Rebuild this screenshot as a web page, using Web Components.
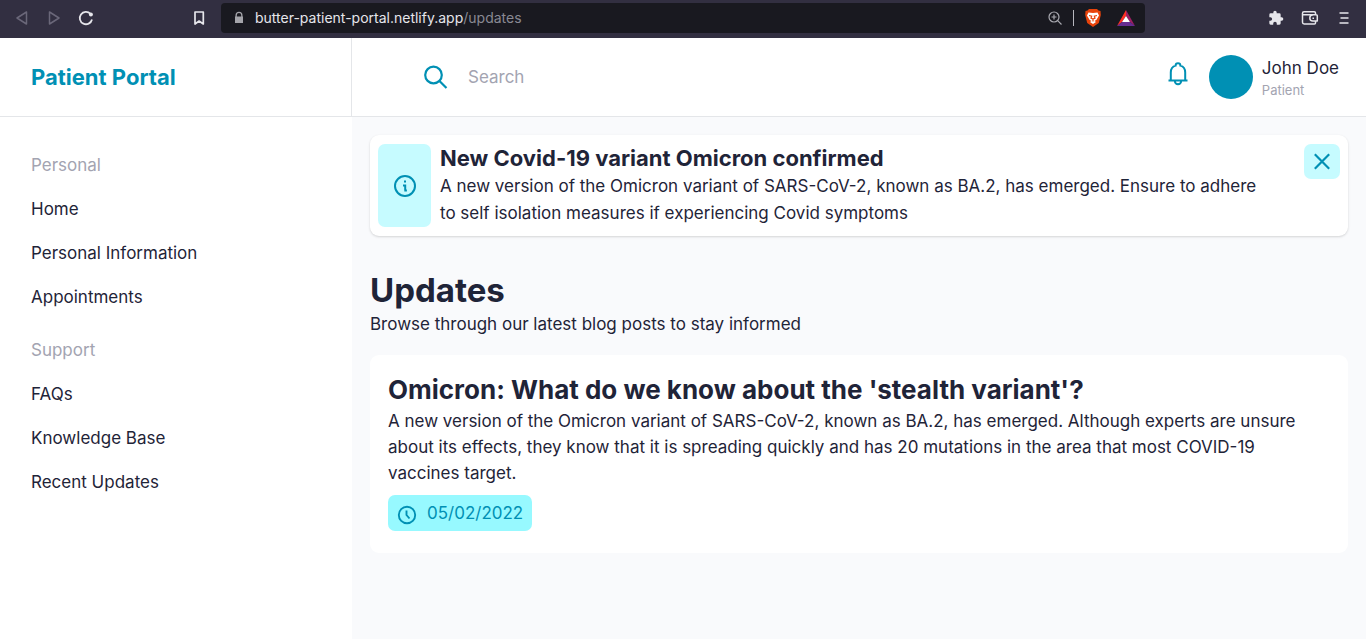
<!DOCTYPE html>
<html lang="en">
<head>
<meta charset="utf-8">
<meta name="viewport" content="width=device-width, initial-scale=1">
<title>Patient Portal</title>
<style>
  body {
    --teal: #0090b4;
    --ink: #1f2438;
    --muted: #a3a4b1;
    --line: #e4e6e9;
    --pale: #c6fbff;
    margin: 0;
    min-height: 100vh;
    display: flex;
    flex-direction: column;
    background: #f9fafc;
    color: var(--ink);
    font: 17px/26px Inter, "Liberation Sans", sans-serif;
  }
</style>
</head>
<body>
<browser-bar host="butter-patient-portal.netlify.app" path="/updates"></browser-bar>
<portal-shell>
  <portal-brand slot="brand">Patient Portal</portal-brand>
  <portal-search slot="top"></portal-search>
  <portal-user slot="top" name="John Doe" role-name="Patient"></portal-user>
  <nav-group slot="nav" heading="Personal" items="Home,Personal Information,Appointments"></nav-group>
  <nav-group slot="nav" heading="Support" items="FAQs,Knowledge Base,Recent Updates"></nav-group>
  <alert-banner heading="New Covid-19 variant Omicron confirmed">A new version of the Omicron variant of SARS-CoV-2, known as BA.2, has emerged. Ensure to adhere to self isolation measures if experiencing Covid symptoms</alert-banner>
  <page-heading heading="Updates">Browse through our latest blog posts to stay informed</page-heading>
  <update-card heading="Omicron: What do we know about the 'stealth variant'?" date="05/02/2022">A new version of the Omicron variant of SARS-CoV-2, known as BA.2, has emerged. Although experts are unsure about its effects, they know that it is spreading quickly and has 20 mutations in the area that most COVID-19 vaccines target.</update-card>
</portal-shell>

<script>
  const resetCss = `
    *, :host { box-sizing: border-box; }
    h1, h2, p, ul { margin: 0; padding: 0; }
    button { border: 0; padding: 0; background: none; color: inherit; font: inherit; display: grid; place-items: center; cursor: pointer; }
    svg { display: block; flex: none; }
  `;

  class BaseElement extends HTMLElement {
    constructor() {
      super();
      this.attachShadow({ mode: 'open' });
    }

    connectedCallback() {
      this.shadowRoot.innerHTML = `<style>${resetCss}${this.styles()}</style>${this.template()}`;
    }

    attr(name) {
      return this.getAttribute(name) || '';
    }
  }

  class BrowserBar extends BaseElement {
    styles() {
      return `
        :host {
          display: flex;
          align-items: center;
          height: 38px;
          padding: 0 12px 2px;
          background: #322f41;
          color: #e6e6eb;
          font-size: 14px;
          line-height: 20px;
        }
        .tools { display: flex; gap: 12px; }
        .tools button { width: 20px; height: 20px; }
        .dim { color: #6a6779; }
        .left { flex: none; width: 209px; padding-right: 12px; }
        .left .mark { margin-left: auto; }
        .address {
          flex: 0 1 924px;
          display: flex;
          align-items: center;
          height: 30px;
          padding: 0 9px 0 12px;
          border-radius: 4px;
          background: #191920;
        }
        .url { flex: 1; margin-left: 10px; }
        .path { color: #898993; }
        .rule { width: 1px; height: 16px; margin: 0 10px; background: #b7b7be; }
        .shields { display: flex; gap: 14px; }
        .right { margin-left: auto; gap: 14px; }
      `;
    }

    template() {
      return `
        <div class="tools left">
          <button class="dim" aria-label="Back"><svg width="14" height="16" viewBox="0 0 14 16" fill="none" stroke="currentColor" stroke-width="1.5" stroke-linejoin="round"><path d="M11.5 2v12L2 8z"/></svg></button>
          <button class="dim" aria-label="Forward"><svg width="14" height="16" viewBox="0 0 14 16" fill="none" stroke="currentColor" stroke-width="1.5" stroke-linejoin="round"><path d="M2.500 2v12L12 8z"/></svg></button>
          <button aria-label="Reload"><svg width="16" height="16" viewBox="0 0 16 16" fill="none" stroke="currentColor" stroke-width="1.800"><path d="M14 9.500A6.200 6.200 0 1 1 12.500 3.800"/><circle cx="12.900" cy="4.400" r="2" fill="currentColor" stroke="none"/></svg></button>
          <button class="mark" aria-label="Bookmark"><svg width="12" height="16" viewBox="0 0 12 16" fill="none" stroke="currentColor" stroke-width="1.700" stroke-linejoin="round"><path d="M2 2h8.300v12L6.100 11 2 14z"/></svg></button>
        </div>
        <div class="address">
          <svg width="12" height="14" viewBox="0 0 12 14" fill="#a4a4aa"><path d="M2.500 5.500V4.300a3.500 3.500 0 0 1 7 0v1.200h.500V12H2V5.500zm1.300 0h4.400V4.300a2.200 2.200 0 0 0-4.400 0z"/></svg>
          <div class="url">${this.attr('host')}<span class="path">${this.attr('path')}</span></div>
          <svg width="16" height="16" viewBox="0 0 16 16" fill="none" stroke="#a9a9b0" stroke-width="1.200"><circle cx="7" cy="7" r="5"/><path d="M10.700 10.700 14.500 14.500M7 4.500v5M4.500 7h5"/></svg>
          <div class="rule"></div>
          <div class="shields">
            <svg width="18" height="20" viewBox="0 0 18 20"><path fill="#e8430b" d="M5 1h8l1.500 1.500L16.500 3l.300 4-2 8L9 19l-5.800-4-2-8 .300-4 2-.500z"/><path fill="#fff" d="M4.500 4.500 9 5l4.500-.500 1.500 3-2.500 4.200-2 1.200L12 14l-3 2-3-2 1.500-1.100-2-1.200L3 7.500z"/><path d="m5 7.500 2.700.700-.700 1.900 2 1 2-1-.700-1.900 2.700-.700M9 11v2.500" fill="none" stroke="#e8430b" stroke-width="1.200"/></svg>
            <svg width="20" height="20" viewBox="0 0 20 20"><path fill="#ff2f24" d="M10 2v6L6 14l-5 4z"/><path fill="#9e1f63" d="m10 2 9 16-5-4-4-6z"/><path fill="#662d91" d="M1 18h18l-5-4H6z"/><path fill="#fff" d="m10 8 4 6H6z"/></svg>
          </div>
        </div>
        <div class="tools right">
          <button aria-label="Extensions"><svg width="16" height="16" viewBox="0 0 24 24" fill="currentColor"><path d="M20.500 11H19V7a2 2 0 0 0-2-2h-4V3.500a2.500 2.500 0 0 0-5 0V5H4a2 2 0 0 0-2 2v3.800h1.500a2.700 2.700 0 0 1 0 5.400H2V20a2 2 0 0 0 2 2h3.800v-1.500a2.700 2.700 0 0 1 5.400 0V22H17a2 2 0 0 0 2-2v-4h1.500a2.500 2.500 0 0 0 0-5z"/></svg></button>
          <button aria-label="Wallet"><svg width="18" height="16" viewBox="0 0 18 16" fill="none" stroke="currentColor" stroke-width="1.500" stroke-linejoin="round"><path d="M14.500 4.700V3a1.200 1.200 0 0 0-1.200-1.200H3A1.500 1.500 0 0 0 1.500 3.300v9A1.700 1.700 0 0 0 3.200 14h10.300a1 1 0 0 0 1-1v-1.700M2 4.700h13q1.300 0 1.300 1v5.300h-4.500a3 3 0 0 1 0-6"/><path d="M11.500 8.200h1.500"/></svg></button>
          <button aria-label="Menu"><svg width="12" height="14" viewBox="0 0 12 14" stroke="currentColor" stroke-width="1.600"><path d="M1.500 2h9M2.500 7h8M1.500 12h9"/></svg></button>
        </div>
      `;
    }
  }

  class PortalShell extends BaseElement {
    styles() {
      return `
        :host {
          flex: 1;
          display: grid;
          grid-template-columns: 352px minmax(0, 1fr);
          grid-template-rows: auto 1fr;
        }
        .brand, .top {
          display: flex;
          align-items: center;
          height: 79px;
          background: #fff;
          border-bottom: 1px solid var(--line);
        }
        .brand { padding-left: 31px; border-right: 1px solid var(--line); }
        .top { justify-content: space-between; padding: 0 27px 0 70px; }
        nav { padding: 26px 18px; background: #fff; }
        main { padding: 18px; }
      `;
    }

    template() {
      return `
        <div class="brand"><slot name="brand"></slot></div>
        <header class="top"><slot name="top"></slot></header>
        <nav><slot name="nav"></slot></nav>
        <main><slot></slot></main>
      `;
    }
  }

  class PortalBrand extends BaseElement {
    styles() {
      return `
        :host { display: block; color: var(--teal); font-size: 22px; font-weight: 700; line-height: 28px; }
      `;
    }

    template() {
      return '<slot></slot>';
    }
  }

  class PortalSearch extends BaseElement {
    styles() {
      return `
        :host { flex: 1; }
        label { display: flex; align-items: center; gap: 18px; color: var(--teal); }
        input {
          flex: 1;
          min-width: 0;
          height: 36px;
          padding: 0;
          border: 0;
          outline: 0;
          background: none;
          color: var(--ink);
          font: inherit;
        }
        input::placeholder { color: var(--muted); opacity: 1; }
      `;
    }

    template() {
      return `
        <label>
          <svg width="28" height="28" viewBox="0 0 28 28" fill="none" stroke="currentColor" stroke-width="2.200" role="img" aria-label="Search"><circle cx="11.500" cy="12" r="8.300"/><path d="m17.500 18 7 7"/></svg>
          <input type="text" placeholder="Search">
        </label>
      `;
    }
  }

  class PortalUser extends BaseElement {
    styles() {
      return `
        :host { display: flex; align-items: center; }
        .bell { width: 26px; height: 36px; margin-right: 18px; padding-bottom: 6px; color: var(--teal); }
        .avatar { width: 44px; height: 44px; margin-right: 9px; border-radius: 50%; background: var(--teal); }
        .role { color: var(--muted); font-size: 13px; line-height: 18px; }
      `;
    }

    template() {
      return `
        <button class="bell" aria-label="Notifications"><svg width="24" height="26" viewBox="0 0 24 26" fill="none" stroke="currentColor" stroke-width="2"><path d="M2.500 19.500h19M4.800 19.500V11.500c0-3.700 2-6.200 4.800-6.900a2.400 2.400 0 0 1 4.800 0c2.800.700 4.800 3.200 4.800 6.900v8M8.800 19.800a3.200 3.500 0 0 0 6.400 0"/></svg></button>
        <div class="avatar"></div>
        <div>
          <div>${this.attr('name')}</div>
          <div class="role">${this.attr('role-name')}</div>
        </div>
      `;
    }
  }

  class NavGroup extends BaseElement {
    styles() {
      return `
        :host { display: block; margin-bottom: 9px; }
        h2, a { display: block; padding: 9px 13px; font-size: inherit; font-weight: 400; }
        h2 { color: var(--muted); }
        ul { list-style: none; }
        a { color: inherit; text-decoration: none; }
      `;
    }

    template() {
      const items = this.attr('items').split(',');
      return `
        <h2>${this.attr('heading')}</h2>
        <ul>${items.map(item => `<li><a href="#">${item}</a></li>`).join('')}</ul>
      `;
    }
  }

  class AlertBanner extends BaseElement {
    styles() {
      return `
        :host {
          display: flex;
          gap: 9px;
          padding: 9px 8px;
          border-radius: 9px;
          background: #fff;
          box-shadow: 0 1px 3px rgba(0, 0, 0, 0.1), 0 1px 2px rgba(0, 0, 0, 0.06);
          line-height: 27px;
        }
        .icon { flex: none; width: 53px; display: grid; place-items: center; border-radius: 7px; background: var(--pale); color: var(--teal); }
        .body { flex: 1; padding-right: 26px; }
        h2 { font-size: 22px; font-weight: 700; line-height: 29px; }
        .close { flex: none; width: 36px; height: 35px; border-radius: 7px; background: var(--pale); color: var(--teal); }
      `;
    }

    template() {
      return `
        <div class="icon"><svg width="24" height="24" viewBox="0 0 24 24" fill="none" stroke="currentColor" stroke-width="2"><circle cx="12" cy="12" r="10"/><path d="M10 11.500h2.200V16M11.300 16.500h2.600M11 7.500h2"/></svg></div>
        <div class="body">
          <h2>${this.attr('heading')}</h2>
          <p><slot></slot></p>
        </div>
        <button class="close" aria-label="Dismiss"><svg width="18" height="18" viewBox="0 0 18 18" fill="none" stroke="currentColor" stroke-width="2.200"><path d="m1.800 1.300 14.400 14.400M16.200 1.300 1.800 15.700"/></svg></button>
      `;
    }
  }

  class PageHeading extends BaseElement {
    styles() {
      return `
        :host { display: block; margin: 34px 0 18px; }
        h1 { font-size: 33px; font-weight: 700; line-height: 41px; }
      `;
    }

    template() {
      return `
        <h1>${this.attr('heading')}</h1>
        <p><slot></slot></p>
      `;
    }
  }

  class UpdateCard extends BaseElement {
    styles() {
      return `
        :host { display: block; padding: 18px 18px 22px; border-radius: 9px; background: #fff; }
        h2 { margin-bottom: 2px; font-size: 26px; font-weight: 700; line-height: 33px; }
        .date {
          display: flex;
          align-items: center;
          gap: 10px;
          width: fit-content;
          height: 36px;
          margin-top: 9px;
          padding: 0 9px;
          border-radius: 7px;
          background: #97f9ff;
          color: var(--teal);
        }
        .date svg { margin-top: 4px; }
      `;
    }

    template() {
      return `
        <h2>${this.attr('heading')}</h2>
        <p><slot></slot></p>
        <div class="date">
          <svg width="20" height="20" viewBox="0 0 20 20" fill="none" stroke="currentColor" stroke-width="1.900"><circle cx="10" cy="10" r="8.200"/><path d="M9.500 5.500V10l3 3.500"/></svg>
          <time>${this.attr('date')}</time>
        </div>
      `;
    }
  }

  customElements.define('browser-bar', BrowserBar);
  customElements.define('portal-shell', PortalShell);
  customElements.define('portal-brand', PortalBrand);
  customElements.define('portal-search', PortalSearch);
  customElements.define('portal-user', PortalUser);
  customElements.define('nav-group', NavGroup);
  customElements.define('alert-banner', AlertBanner);
  customElements.define('page-heading', PageHeading);
  customElements.define('update-card', UpdateCard);
</script>
</body>
</html>
